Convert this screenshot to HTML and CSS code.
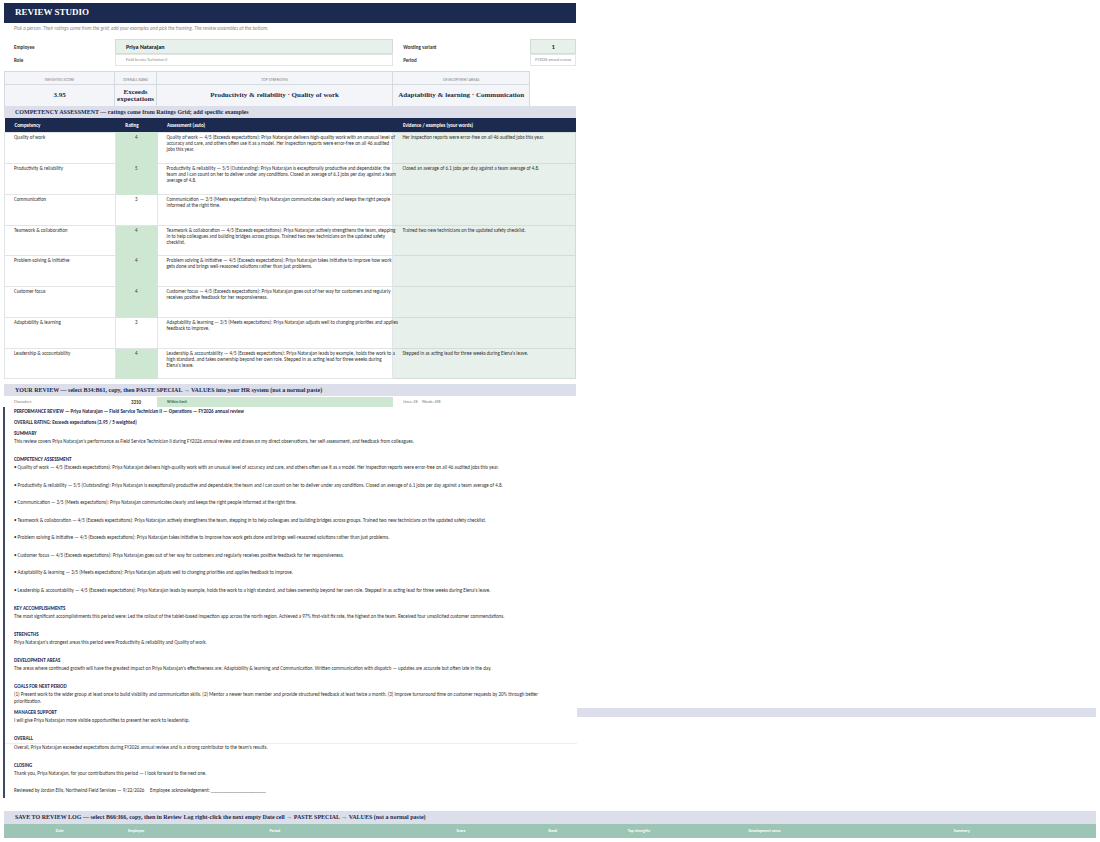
FILE: index.html
```
<!DOCTYPE html>
<html lang="en">
<head>
    <meta charset="utf-8">
    <title>Review Studio</title>
    <link rel="stylesheet" href="styles.css">
</head>
<body>
    <main class="workbook">
        <div class="sheet">
            <header class="banner">
                <h1>REVIEW STUDIO</h1>
            </header>
            <p class="hint">Pick a person. Their ratings come from the grid; add your examples and pick the framing. The review assembles at the bottom.</p>

            <form class="setup">
                <label for="employee">Employee</label>
                <input class="field pick" type="text" id="employee" value="Priya Natarajan">
                <label for="variant">Wording variant</label>
                <input class="field variant" type="text" id="variant" value="1">
                <label for="role">Role</label>
                <output class="field" id="role">Field Service Technician II</output>
                <label for="period">Period</label>
                <output class="field period" id="period">FY2026 annual review</output>
            </form>

            <section class="scores">
                <div class="score"><h3>WEIGHTED SCORE</h3><p>3.95</p></div>
                <div class="score"><h3>OVERALL BAND</h3><p>Exceeds expectations</p></div>
                <div class="score"><h3>TOP STRENGTHS</h3><p>Productivity &amp; reliability · Quality of work</p></div>
                <div class="score"><h3>DEVELOPMENT AREAS</h3><p>Adaptability &amp; learning · Communication</p></div>
            </section>

            <h2 class="bar">COMPETENCY ASSESSMENT — ratings come from Ratings Grid; add specific examples</h2>
            <table class="ratings">
                <colgroup>
                    <col class="c-name"><col class="c-rating"><col class="c-text"><col class="c-evidence">
                </colgroup>
                <thead>
                    <tr><th>Competency</th><th>Rating</th><th>Assessment (auto)</th><th>Evidence / examples (your words)</th></tr>
                </thead>
                <tbody>
                    <tr>
                        <td>Quality of work</td>
                        <td class="num good">4</td>
                        <td>Quality of work — 4/5 (Exceeds expectations): Priya Natarajan delivers high-quality work with an unusual level of<br>accuracy and care, and others often use it as a model. Her inspection reports were error-free on all 46 audited<br>jobs this year.</td>
                        <td class="evidence">Her inspection reports were error-free on all 46 audited jobs this year.</td>
                    </tr>
                    <tr>
                        <td>Productivity &amp; reliability</td>
                        <td class="num good">5</td>
                        <td>Productivity &amp; reliability — 5/5 (Outstanding): Priya Natarajan is exceptionally productive and dependable; the<br>team and I can count on her to deliver under any conditions. Closed an average of 6.1 jobs per day against a team<br>average of 4.8.</td>
                        <td class="evidence">Closed an average of 6.1 jobs per day against a team average of 4.8.</td>
                    </tr>
                    <tr>
                        <td>Communication</td>
                        <td class="num">3</td>
                        <td>Communication — 3/5 (Meets expectations): Priya Natarajan communicates clearly and keeps the right people<br>informed at the right time.</td>
                        <td class="evidence"></td>
                    </tr>
                    <tr>
                        <td>Teamwork &amp; collaboration</td>
                        <td class="num good">4</td>
                        <td>Teamwork &amp; collaboration — 4/5 (Exceeds expectations): Priya Natarajan actively strengthens the team, stepping<br>in to help colleagues and building bridges across groups. Trained two new technicians on the updated safety<br>checklist.</td>
                        <td class="evidence">Trained two new technicians on the updated safety checklist.</td>
                    </tr>
                    <tr>
                        <td>Problem solving &amp; initiative</td>
                        <td class="num good">4</td>
                        <td>Problem solving &amp; initiative — 4/5 (Exceeds expectations): Priya Natarajan takes initiative to improve how work<br>gets done and brings well-reasoned solutions rather than just problems.</td>
                        <td class="evidence"></td>
                    </tr>
                    <tr>
                        <td>Customer focus</td>
                        <td class="num good">4</td>
                        <td>Customer focus — 4/5 (Exceeds expectations): Priya Natarajan goes out of her way for customers and regularly<br>receives positive feedback for her responsiveness.</td>
                        <td class="evidence"></td>
                    </tr>
                    <tr>
                        <td>Adaptability &amp; learning</td>
                        <td class="num">3</td>
                        <td>Adaptability &amp; learning — 3/5 (Meets expectations): Priya Natarajan adjusts well to changing priorities and applies<br>feedback to improve.</td>
                        <td class="evidence"></td>
                    </tr>
                    <tr>
                        <td>Leadership &amp; accountability</td>
                        <td class="num good">4</td>
                        <td>Leadership &amp; accountability — 4/5 (Exceeds expectations): Priya Natarajan leads by example, holds the work to a<br>high standard, and takes ownership beyond her own role. Stepped in as acting lead for three weeks during<br>Elena's leave.</td>
                        <td class="evidence">Stepped in as acting lead for three weeks during Elena's leave.</td>
                    </tr>
                </tbody>
            </table>

            <h2 class="bar">YOUR REVIEW — select B34:B61, copy, then PASTE SPECIAL → VALUES into your HR system (not a normal paste)</h2>
            <div class="counts">
                <span>Characters</span>
                <span class="total">3310</span>
                <span class="limit">Within limit</span>
                <span class="words">Lines: 28 &nbsp;&nbsp;&nbsp; Words: 498</span>
            </div>
        </div>

        <!-- Assembled review, one line per sheet row -->
        <article class="review">
            <h3 class="line">PERFORMANCE REVIEW — Priya Natarajan — Field Service Technician II — Operations — FY2026 annual review</h3>
            <h3 class="line rating">OVERALL RATING: Exceeds expectations (3.95 / 5 weighted)</h3>
            <h3 class="line">SUMMARY</h3>
            <p class="line">This review covers Priya Natarajan's performance as Field Service Technician II during FY2026 annual review and draws on my direct observations, her self-assessment, and feedback from colleagues.</p>
            <h3 class="line">COMPETENCY ASSESSMENT</h3>
            <ul class="points">
                <li class="line">• Quality of work — 4/5 (Exceeds expectations): Priya Natarajan delivers high-quality work with an unusual level of accuracy and care, and others often use it as a model. Her inspection reports were error-free on all 46 audited jobs this year.</li>
                <li class="line">• Productivity &amp; reliability — 5/5 (Outstanding): Priya Natarajan is exceptionally productive and dependable; the team and I can count on her to deliver under any conditions. Closed an average of 6.1 jobs per day against a team average of 4.8.</li>
                <li class="line">• Communication — 3/5 (Meets expectations): Priya Natarajan communicates clearly and keeps the right people informed at the right time.</li>
                <li class="line">• Teamwork &amp; collaboration — 4/5 (Exceeds expectations): Priya Natarajan actively strengthens the team, stepping in to help colleagues and building bridges across groups. Trained two new technicians on the updated safety checklist.</li>
                <li class="line">• Problem solving &amp; initiative — 4/5 (Exceeds expectations): Priya Natarajan takes initiative to improve how work gets done and brings well-reasoned solutions rather than just problems.</li>
                <li class="line">• Customer focus — 4/5 (Exceeds expectations): Priya Natarajan goes out of her way for customers and regularly receives positive feedback for her responsiveness.</li>
                <li class="line">• Adaptability &amp; learning — 3/5 (Meets expectations): Priya Natarajan adjusts well to changing priorities and applies feedback to improve.</li>
                <li class="line">• Leadership &amp; accountability — 4/5 (Exceeds expectations): Priya Natarajan leads by example, holds the work to a high standard, and takes ownership beyond her own role. Stepped in as acting lead for three weeks during Elena's leave.</li>
            </ul>
            <h3 class="line">KEY ACCOMPLISHMENTS</h3>
            <p class="line">The most significant accomplishments this period were: Led the rollout of the tablet-based inspection app across the north region. Achieved a 97% first-visit fix rate, the highest on the team. Received four unsolicited customer commendations.</p>
            <h3 class="line">STRENGTHS</h3>
            <p class="line">Priya Natarajan's strongest areas this period were Productivity &amp; reliability and Quality of work.</p>
            <h3 class="line">DEVELOPMENT AREAS</h3>
            <p class="line">The areas where continued growth will have the greatest impact on Priya Natarajan's effectiveness are: Adaptability &amp; learning and Communication. Written communication with dispatch — updates are accurate but often late in the day.</p>
            <h3 class="line">GOALS FOR NEXT PERIOD</h3>
            <p class="line">(1) Present work to the wider group at least once to build visibility and communication skills. (2) Mentor a newer team member and provide structured feedback at least twice a month. (3) Improve turnaround time on customer requests by 20% through better prioritization.</p>
            <div class="split">
                <h3 class="line">MANAGER SUPPORT</h3>
                <div class="strip"></div>
            </div>
            <p class="line">I will give Priya Natarajan more visible opportunities to present her work to leadership.</p>
            <h3 class="line">OVERALL</h3>
            <p class="line ruled">Overall, Priya Natarajan exceeded expectations during FY2026 annual review and is a strong contributor to the team's results.</p>
            <h3 class="line">CLOSING</h3>
            <p class="line">Thank you, Priya Natarajan, for your contributions this period — I look forward to the next one.</p>
            <p class="line signature">Reviewed by Jordan Ellis, Northwind Field Services — 9/22/2026 &nbsp;&nbsp;&nbsp; Employee acknowledgement: ______________________</p>
        </article>

        <section class="log">
            <h2 class="bar">SAVE TO REVIEW LOG — select B66:I66, copy, then in Review Log right-click the next empty Date cell → PASTE SPECIAL → VALUES (not a normal paste)</h2>
            <table class="log-table">
                <thead>
                    <tr><th>Date</th><th>Employee</th><th>Period</th><th>Score</th><th>Band</th><th>Top strengths</th><th>Development areas</th><th>Summary</th></tr>
                </thead>
            </table>
        </section>
    </main>
</body>
</html>
```
FILE: styles.css
```
* {
    box-sizing: border-box;
}

body {
    margin: 0;
    background-color: #fff;
    color: #333;
    font-family: Calibri, Carlito, Lato, sans-serif;
    font-size: 5px;
    line-height: 6px;
}

h1, h2, h3, p, ul {
    margin: 0;
    padding: 0;
    font-size: inherit;
}

.workbook {
    --navy: #1b2a4e;
    --mint: #e8f0eb;
    --green: #cde7d2;
    --lilac: #dcdfea;
    --sheet: 52.4%;
    padding: 3px 4px;
}

.sheet {
    width: var(--sheet);
}

.banner {
    height: 20px;
    padding-left: 11px;
    background-color: var(--navy);
    color: #fff;
}

.banner h1 {
    font-family: "Liberation Serif", serif;
    font-size: 9px;
    line-height: 19px;
}

.hint {
    padding: 2px 10px 9px;
    color: #888;
    font-style: italic;
}

/* Employee and period pickers */
.setup {
    display: grid;
    grid-template-columns: 111fr 278fr 137fr 46fr;
    grid-template-rows: 15px 12px;
    align-items: center;
    margin-top: -1px;
}

.setup label {
    padding-left: 10px;
    font-weight: bold;
}

.field {
    width: 100%;
    height: 100%;
    margin: 0;
    padding: 0 10px;
    border: 1px solid #e2e7e4;
    color: #888;
    font-family: inherit;
    font-size: 4px;
    line-height: 9px;
    white-space: nowrap;
}

.field.pick, .field.variant {
    background-color: var(--mint);
    border-color: #d3ddd6;
    color: #111;
    font-size: 6px;
    font-weight: bold;
}

.field.variant {
    text-align: center;
}

.field.period {
    padding: 0;
    text-align: center;
}

.scores {
    display: grid;
    grid-template-columns: 111fr 42fr 236fr 137fr 46fr;
    margin-top: 5px;
}

.score {
    display: grid;
    grid-template-rows: 13px 21px;
    border: 1px solid #d5dae0;
    border-width: 1px 1px 0 0;
    background-color: #f3f5f8;
    text-align: center;
}

.score:first-child {
    border-left-width: 1px;
}

.score h3 {
    padding-top: 5px;
    border-bottom: 1px solid #d5dae0;
    color: #888;
    font-size: 4px;
    font-weight: normal;
}

.score p {
    align-self: center;
    color: var(--navy);
    font-family: "Liberation Serif", serif;
    font-size: 7px;
    font-weight: bold;
    line-height: 7px;
}

.bar {
    height: 12px;
    padding-left: 11px;
    background-color: var(--lilac);
    color: var(--navy);
    font-family: "Liberation Serif", serif;
    font-size: 6px;
    line-height: 12px;
    white-space: nowrap;
}

table {
    width: 100%;
    border-collapse: collapse;
    table-layout: fixed;
}

.ratings {
    margin-bottom: 5px;
}

.c-name { width: 19.4%; }
.c-rating { width: 7.3%; }
.c-text { width: 41.3%; }
.c-evidence { width: 32%; }

.ratings th {
    height: 14px;
    padding: 0 0 0 10px;
    background-color: var(--navy);
    color: #fff;
    text-align: left;
}

.ratings td {
    height: 31px;
    padding: 1px 0 0 9px;
    border: 1px solid #e2e5e8;
    vertical-align: top;
    white-space: nowrap;
}

.ratings tr:nth-child(4n) td {
    height: 30px;
}

.ratings .num {
    padding-left: 0;
    text-align: center;
}

.ratings .num.good {
    background-color: var(--green);
    border-color: var(--green);
}

.ratings .evidence {
    background-color: var(--mint);
    border-color: #d3ddd6;
}

.counts {
    display: grid;
    grid-template-columns: 111fr 42fr 236fr 183fr;
    height: 11px;
    padding-top: 1px;
    color: #777;
    line-height: 10px;
}

.counts span {
    padding-left: 10px;
    font-size: 4px;
}

.counts .total {
    padding-left: 0;
    color: #333;
    font-size: 5px;
    font-weight: bold;
    text-align: center;
}

.counts .limit {
    background-color: var(--green);
    color: #2f6b45;
    font-weight: bold;
}

.review {
    border-left: 2px solid #3c4a68;
    margin-left: -1px;
}

.line {
    width: var(--sheet);
    min-height: 17px;
    padding: 0 12px 0 9px;
    line-height: 7px;
    list-style: none;
}

h3.line {
    min-height: 9px;
    padding-top: 1px;
    color: var(--navy);
}

h3.line.rating {
    min-height: 13px;
    padding-top: 3px;
}

.points .line:nth-child(odd) {
    min-height: 18px;
}

.split {
    display: flex;
}

.strip {
    flex: 1;
    background-color: #dddeeb;
}

p.line.ruled {
    min-height: 18px;
    border-top: 1px solid #eee;
}

p.line.signature {
    min-height: 11px;
    white-space: nowrap;
}

.log {
    margin-top: 13px;
}

.log .bar {
    height: 13px;
}

.log-table th {
    height: 14px;
    padding: 0;
    background-color: #9cc5b5;
    color: #fff;
    font-size: 4px;
}

.log-table th:nth-child(1) { width: 10.2%; }
.log-table th:nth-child(2) { width: 3.8%; }
.log-table th:nth-child(3) { width: 21.6%; }
.log-table th:nth-child(4) { width: 12.5%; }
.log-table th:nth-child(5) { width: 4.3%; }
.log-table th:nth-child(6) { width: 11.5%; }
.log-table th:nth-child(7) { width: 11.5%; }
```
